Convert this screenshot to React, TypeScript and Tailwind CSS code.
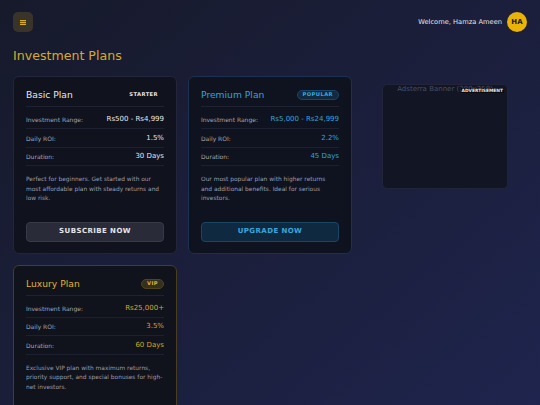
import React from "react";

type Plan = {
  name: string;
  badge: string;
  range: string;
  roi: string;
  duration: string;
  desc: string;
  descW: string;
  button: string;
  card: string;
  title: string;
  value: string;
  badgeCls: string;
  btnCls: string;
};

const plans: Plan[] = [
  {
    name: "Basic Plan",
    badge: "STARTER",
    range: "Rs500 - Rs4,999",
    roi: "1.5%",
    duration: "30 Days",
    desc: "Perfect for beginners. Get started with our most affordable plan with steady returns and low risk.",
    descW: "max-w-full",
    button: "SUBSCRIBE NOW",
    card: "border-[#23263a] bg-[#10121d]",
    title: "text-[#e6e7ec]",
    value: "text-[#e6e7ec]",
    badgeCls: "border-transparent bg-transparent text-[#e6e7ec]",
    btnCls: "bg-[#2a2b38] border-[#393a48] text-[#e4e5ea]",
  },
  {
    name: "Premium Plan",
    badge: "POPULAR",
    range: "Rs5,000 - Rs24,999",
    roi: "2.2%",
    duration: "45 Days",
    desc: "Our most popular plan with higher returns and additional benefits. Ideal for serious investors.",
    descW: "max-w-[134px]",
    button: "UPGRADE NOW",
    card: "border-[#1c3150] bg-[#0f131f]",
    title: "text-[#33a3d9]",
    value: "text-[#33a3d9]",
    badgeCls: "border-[#1d4466] bg-[#122a40] text-[#3aa9df]",
    btnCls: "bg-[#0f2a40] border-[#1b4564] text-[#37a7de]",
  },
  {
    name: "Luxury Plan",
    badge: "VIP",
    range: "Rs25,000+",
    roi: "3.5%",
    duration: "60 Days",
    desc: "Exclusive VIP plan with maximum returns, priority support, and special bonuses for high-net investors.",
    descW: "max-w-full",
    button: "GO VIP NOW",
    card: "border-[#4a3e1e] bg-[#10121c]",
    title: "text-[#e2b42a]",
    value: "text-[#d8a722]",
    badgeCls: "border-[#4f4320] bg-[#35301e] text-[#e0b230]",
    btnCls: "bg-[#3a3020] border-[#5a4a22] text-[#e0b230]",
  },
];

function PlanCard({ p }: { p: Plan }) {
  return (
    <div className={`flex flex-col rounded-[6px] border px-[12px] pt-[12px] pb-[11px] ${p.card}`}>
      <div className="flex items-center justify-between border-b border-[#1f2231] pb-[5px]">
        <span className={`text-[9.2px] leading-[12px] ${p.title}`}>{p.name}</span>
        <span
          className={`rounded-full border px-[5px] h-[10px] flex items-center text-[5.2px] font-bold tracking-[0.08em] ${p.badgeCls}`}
        >
          {p.badge}
        </span>
      </div>
      <div className="mt-[4px]">
        {[
          ["Investment Range:", p.range],
          ["Daily ROI:", p.roi],
          ["Duration:", p.duration],
        ].map(([l, v]) => (
          <div
            key={l}
            className="flex h-[18.4px] items-center justify-between border-b border-[#1d2030]"
          >
            <span className="text-[6px] text-[#a3a6b4]">{l}</span>
            <span className={`text-[7px] ${p.value}`}>{v}</span>
          </div>
        ))}
      </div>
      <p className={`mt-[9px] mb-[18px] text-[5.9px] leading-[9.5px] text-[#9a9dac] ${p.descW}`}>
        {p.desc}
      </p>
      <button
        className={`mt-auto flex h-[20px] w-full items-center justify-center rounded-[4px] border text-[7px] font-bold tracking-[0.06em] ${p.btnCls}`}
      >
        {p.button}
      </button>
    </div>
  );
}

export default function App() {
  return (
    <div
      className="min-h-screen w-full bg-gradient-to-br from-[#171a2b] via-[#1b1f3c] to-[#1f2550] px-[13px] pt-[12px] pb-[20px]"
      style={{ fontFamily: '"DejaVu Sans", Verdana, sans-serif' }}
    >
      <header className="flex h-[20px] items-center justify-between">
        <button className="flex h-[20px] w-[20px] items-center justify-center rounded-[5px] bg-[#39342a]">
          <svg width="6" height="5" viewBox="0 0 6 5">
            <rect x="0" y="0" width="6" height="1.2" fill="#d9aa22" />
            <rect x="0" y="1.9" width="6" height="1.2" fill="#d9aa22" />
            <rect x="0" y="3.8" width="6" height="1.2" fill="#d9aa22" />
          </svg>
        </button>
        <div className="flex items-center gap-[5px]">
          <span className="text-[6.7px] text-[#e4e5ea]">Welcome, Hamza Ameen</span>
          <div className="flex h-[20px] w-[20px] items-center justify-center rounded-full bg-[#eab308] text-[7px] font-bold text-[#1a1a1a]">
            HA
          </div>
        </div>
      </header>
      <h1 className="mt-[15.6px] text-[12.6px] leading-[16px] text-[#d6a92c]">Investment Plans</h1>
      <div className="mt-[12.4px] grid grid-cols-3 gap-[11px]">
        <PlanCard p={plans[0]} />
        <PlanCard p={plans[1]} />
        <div className="relative mt-[8px] h-[105px] w-[126px] self-start justify-self-center overflow-hidden rounded-[5px] border border-[#222539] bg-[#121524]">
          <div className="whitespace-nowrap text-center text-[7px] leading-[8px] text-[#4a4e63]">
            Adsterra Banner (300x250)
          </div>
          <div className="absolute right-[3px] top-[3px] bg-[#0b0b0f] px-[1px] text-[4.4px] leading-[5.5px] font-bold text-[#e8e8e8]">
            ADVERTISEMENT
          </div>
        </div>
        <PlanCard p={plans[2]} />
      </div>
    </div>
  );
}
